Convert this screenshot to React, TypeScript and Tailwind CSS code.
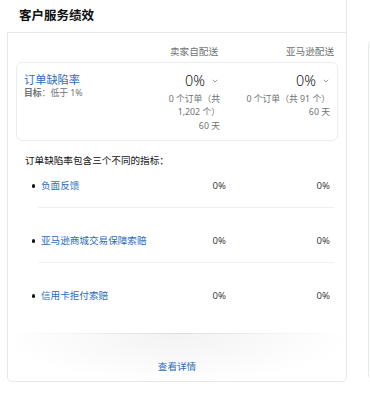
import React from "react";

const metrics = [
  { name: "负面反馈", seller: "0%", amazon: "0%" },
  { name: "亚马逊商城交易保障索赔", seller: "0%", amazon: "0%" },
  { name: "信用卡拒付索赔", seller: "0%", amazon: "0%" },
];

const Chevron = () => (
  <svg width="6" height="4" viewBox="0 0 6 4" className="shrink-0">
    <path d="M0.8 0.8 L3 3 L5.2 0.8" fill="none" stroke="#8a8f8f" strokeWidth="0.9" />
  </svg>
);

const App: React.FC = () => {
  return (
    <div
      className="w-[370px] h-[396px] overflow-hidden bg-white flex gap-[21px] pl-[7px] text-[#0f1111]"
      style={{ fontFamily: '"Noto Sans", "Noto Sans CJK SC", sans-serif' }}
    >
      {/* Main card */}
      <div className="w-[340px] shrink-0 flex flex-col h-[382px]">
        {/* Header */}
        <div className="h-[33px] shrink-0 flex items-center pl-[12px] border-b border-r border-[#e7e9e9]">
          <h2 className="text-[12.5px] font-bold leading-none">客户服务绩效</h2>
        </div>

        <div className="flex-1 flex flex-col border-l border-r border-b border-[#e7e9e9] rounded-b-[5px] px-[8px]">
          {/* Column headers */}
          <div className="flex pt-[12px] pb-[4px] text-[9.6px] leading-[13px] text-[#6f7373]">
            <div className="flex-1" />
            <div className="w-[60px] text-right">卖家自配送</div>
            <div className="w-[116px] text-right mr-[4px]">亚马逊配送</div>
          </div>

          {/* ODR summary */}
          <div className="flex border border-[#eaeded] rounded-[6px] pl-[7px] pr-[7px] pt-[9px] pb-[7px]">
            <div className="flex-1">
              <div className="text-[11.2px] leading-[15px] text-[#2a6cc0]">订单缺陷率</div>
              <div className="text-[8.8px] leading-[13px] text-[#6f7373]">
                <span className="font-bold">目标</span>：低于 1%
              </div>
            </div>
            <div className="w-[62px] flex flex-col items-end">
              <div className="flex items-center gap-[7px] pr-[2px]">
                <span className="text-[14.4px] leading-[18px] font-light">0%</span>
                <Chevron />
              </div>
              <div className="mt-[2.5px] text-[8.8px] leading-[13.5px] text-[#6f7373] text-right">
                0 个订单（共 1,202 个）
                <br />
                60 天
              </div>
            </div>
            <div className="w-[90px] ml-[20px] flex flex-col items-end">
              <div className="flex items-center gap-[7px] pr-[1px]">
                <span className="text-[14.4px] leading-[18px] font-light">0%</span>
                <Chevron />
              </div>
              <div className="mt-[2.5px] text-[8.8px] leading-[13.5px] text-[#6f7373] text-right">
                0 个订单（共 91 个）
                <br />
                60 天
              </div>
            </div>
          </div>

          {/* Breakdown */}
          <p className="mt-[13px] pl-[9px] text-[9.6px] leading-[14px] text-[#0f1111]">
            订单缺陷率包含三个不同的指标：
          </p>
          <ul className="mt-[10px] pr-[4px]">
            {metrics.map((m, i) => (
              <li key={m.name} className="flex">
                <div className="w-[22px] shrink-0 flex justify-end pr-[3px]">
                  <span
                    className={`mt-[6px] w-[3.5px] h-[3.5px] rounded-full bg-[#0f1111] ${i === 0 ? "" : "translate-y-[25px]"}`}
                  />
                </div>
                <div
                  className={`flex-1 flex pl-[3px] text-[9.6px] leading-[16px] ${
                    i === 0 ? "pb-[13px]" : "pt-[25px] pb-[13px]"
                  } ${i < metrics.length - 1 ? "border-b border-[#eef0f0]" : ""}`}
                >
                  <span className="flex-1 text-[#2a6cc0]">{m.name}</span>
                  <span className="w-[40px] text-right text-[#333] font-['Open_Sans',sans-serif]">{m.seller}</span>
                  <span className="w-[108px] text-right pr-[4px] text-[#333] font-['Open_Sans',sans-serif]">{m.amazon}</span>
                </div>
              </li>
            ))}
          </ul>

          {/* Footer */}
          <div className="mt-[16px] flex-1 flex flex-col -mx-[4px]">
            <div className="h-px mx-[4px] bg-gradient-to-r from-transparent via-[#dcdede] to-transparent" />
            <div className="flex-1 flex items-end justify-center pb-[7px] bg-[radial-gradient(ellipse_at_top,#f3f3f3,#ffffff_75%)]">
              <a className="text-[9.6px] leading-[14px] text-[#2a6cc0]">查看详情</a>
            </div>
          </div>
        </div>
      </div>

      {/* Neighbouring card */}
      <div className="w-[100px] shrink-0 mt-[40px] h-[339px] border-l border-t border-b border-[#e7e9e9] rounded-l-[5px]" />
    </div>
  );
};

export default App;
